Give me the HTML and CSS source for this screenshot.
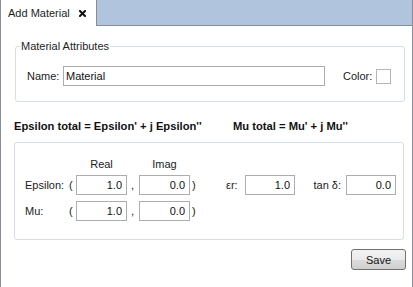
FILE: index.html
```html
<!DOCTYPE html>
<html lang="en">
<head>
    <meta charset="UTF-8">
    <title>Add Material</title>
    <link rel="stylesheet" href="styles.css">
</head>
<body>
<div id="window">
    <div class="tabbar">
        <div class="tab">
            <span class="tab-title">Add Material</span>
            <svg class="tab-close" width="7" height="7" viewBox="0 0 7 7">
                <path d="M1 1 L6 6 M6 1 L1 6" stroke="#111" stroke-width="2" stroke-linecap="square"/>
            </svg>
        </div>
        <div class="tab-fill"></div>
    </div>
    <div class="panel">
        <fieldset class="group attrs">
            <legend>Material Attributes</legend>
            <div class="name-row">
                <label class="lbl-name">Name:</label>
                <input class="field name-field" type="text" value="Material">
                <label class="lbl-color">Color:</label>
                <span class="color-box"></span>
            </div>
        </fieldset>

        <div class="totals">
            <span class="total-eps">Epsilon total = Epsilon' + j Epsilon''</span>
            <span class="total-mu">Mu total = Mu' + j Mu''</span>
        </div>

        <div class="group values">
            <div class="row head-row">
                <span class="c-label"></span>
                <span class="c-open"></span>
                <span class="c-num head">Real</span>
                <span class="c-comma"></span>
                <span class="c-num head">Imag</span>
            </div>
            <div class="row">
                <span class="c-label">Epsilon:</span>
                <span class="c-open">(</span>
                <input class="field c-num" type="text" value="1.0">
                <span class="c-comma">,</span>
                <input class="field c-num" type="text" value="0.0">
                <span class="c-close">)</span>
                <span class="c-er">εr:</span>
                <input class="field c-num2" type="text" value="1.0">
                <span class="c-tan">tan δ:</span>
                <input class="field c-num2" type="text" value="0.0">
            </div>
            <div class="row">
                <span class="c-label">Mu:</span>
                <span class="c-open">(</span>
                <input class="field c-num" type="text" value="1.0">
                <span class="c-comma">,</span>
                <input class="field c-num" type="text" value="0.0">
                <span class="c-close">)</span>
            </div>
        </div>

        <div class="actions">
            <button class="btn-save">Save</button>
        </div>
    </div>
</div>
</body>
</html>
```

FILE: styles.css
```css
* {
    margin: 0;
    padding: 0;
    box-sizing: border-box;
}

body {
    width: 413px;
    height: 287px;
    overflow: hidden;
    background-color: #fff;
    font-family: "Liberation Sans", Arial, sans-serif;
    font-size: 11px;
    color: #1b1b1b;
}

#window {
    display: flex;
    flex-direction: column;
    height: 287px;
}

.tabbar {
    display: flex;
    height: 26px;
}

.tab {
    width: 97px;
    background-color: #fff;
    border-left: 1px solid #8a8d99;
    border-right: 1px solid #8a8d99;
    display: flex;
    align-items: center;
    padding: 0 0 1px 7px;
}

.tab-title {
    font-size: 11px;
    color: #1e1e1e;
}

.tab-close {
    margin-left: 9px;
    margin-top: 1px;
}

.tab-fill {
    flex: 1;
    background-color: #b0c4de;
    border-bottom: 1px solid #8a8d99;
    border-right: 1px solid #8a8d99;
}

.panel {
    flex: 1;
    border-left: 1px solid #8a8d99;
    border-right: 1px solid #8a8d99;
    padding: 0 6px 0 12px;
}

.group {
    border: 1px solid #d5dfe5;
    border-radius: 3px;
}

.attrs {
    margin: 14px 1px 0 2px;
    padding: 0 0 0 4px;
}

.attrs legend {
    padding: 0 1px;
    color: #1e1e1e;
}

.name-row {
    display: flex;
    align-items: center;
    height: 20px;
    margin: 14px 0 15px 7px;
}

.lbl-name {
    width: 36px;
}

.field {
    height: 20px;
    border: 1px solid #abadb3;
    font-family: "Liberation Sans", Arial, sans-serif;
    font-size: 11px;
    color: #111;
    background-color: #fff;
    outline: none;
}

.name-field {
    width: 262px;
    padding: 0 2px;
}

.lbl-color {
    margin-left: 18px;
    width: 33px;
}

.color-box {
    width: 15px;
    height: 15px;
    border: 1px solid #b5b5b5;
    background-color: #fff;
}

.totals {
    display: flex;
    font-weight: bold;
    font-size: 11.2px;
    color: #111;
    margin: 18px 0 0 1px;
    height: 16px;
}

.total-eps {
    width: 219px;
}

.values {
    margin: 6px 2px 0 1px;
    padding: 10px 0 18px 10px;
}

.row {
    display: flex;
    align-items: center;
    height: 20px;
    margin-top: 6px;
}

.head-row {
    height: 22px;
    margin-top: 0;
}

.head-row + .row {
    margin-top: 0;
}

.c-label {
    width: 44px;
}

.c-open {
    width: 7px;
}

.c-num {
    width: 51px;
    text-align: right;
    padding-right: 4px;
}

.head {
    text-align: center;
    padding-right: 0;
}

.c-comma {
    width: 12px;
    padding-left: 4px;
}

.c-close {
    width: 36px;
    padding-left: 2px;
}

.c-er {
    width: 19px;
}

.c-num2 {
    width: 50px;
    text-align: right;
    padding-right: 4px;
}

.c-tan {
    width: 51px;
    text-align: right;
    padding-right: 5px;
}

.actions {
    display: flex;
    justify-content: flex-end;
    margin-top: 9px;
}

.btn-save {
    width: 55px;
    height: 21px;
    border: 1px solid #707070;
    border-radius: 3px;
    background: linear-gradient(#f2f2f2, #ebebeb 50%, #dddddd 51%, #cfcfcf);
    font-family: "Liberation Sans", Arial, sans-serif;
    font-size: 11px;
    color: #111;
}
```
